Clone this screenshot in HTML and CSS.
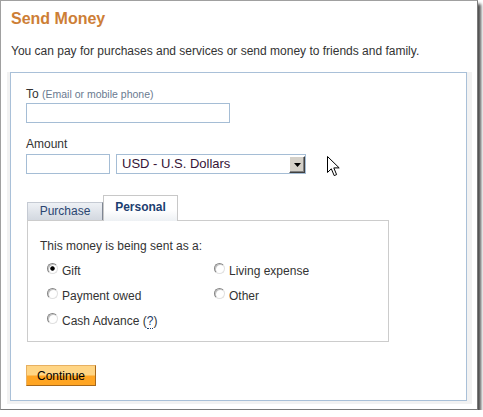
FILE: index.html
```html
<!DOCTYPE html>
<html>
<head>
    <title>Send Money</title>
    <link rel="stylesheet" href="styles.css">
</head>
<body>
    <div class="window">
        <h1 class="title">Send Money</h1>
        <p class="intro">You can pay for purchases and services or send money to friends and family.</p>

        <div class="box-wrap">
            <form class="box" onsubmit="event.preventDefault();">
                <label class="label">To <span class="hint">(Email or mobile phone)</span></label>
                <input type="text" class="field field-to">

                <label class="label label-amount">Amount</label>
                <div class="amount-row">
                    <input type="text" class="field field-amount">
                    <div class="select">
                        <span class="select-text">USD - U.S. Dollars</span>
                        <span class="select-btn">
                            <svg width="7" height="4" viewBox="0 0 7 4"><path d="M0 0h7L3.5 4z" fill="#000"/></svg>
                        </span>
                    </div>
                </div>

                <!-- tabs -->
                <div class="tabs">
                    <div class="tab">Purchase</div>
                    <div class="tab tab-active">Personal</div>
                </div>
                <div class="panel">
                    <div class="panel-title">This money is being sent as a:</div>
                    <div class="options">
                        <label class="option"><input type="radio" name="kind" checked><span>Gift</span></label>
                        <label class="option"><input type="radio" name="kind"><span>Living expense</span></label>
                        <label class="option"><input type="radio" name="kind"><span>Payment owed</span></label>
                        <label class="option"><input type="radio" name="kind"><span>Other</span></label>
                        <label class="option"><input type="radio" name="kind"><span>Cash Advance (<span class="help">?</span>)</span></label>
                    </div>
                </div>

                <button type="submit" class="button">Continue</button>
            </form>
        </div>

        <svg class="cursor" width="13" height="21" viewBox="0 0 13 21">
            <path d="M0.5 0.5V16.5L4.3 12.8L7.2 19.6L9.6 18.6L6.8 11.9H12.2Z" fill="#fff" stroke="#000" stroke-width="1" stroke-linejoin="miter"/>
        </svg>
    </div>
</body>
</html>
```

FILE: styles.css
```css
body {
    margin: 0;
    background: #fff;
    font-family: "Liberation Sans", Arial, sans-serif;
    font-size: 12px;
    color: #333;
}

/* screenshot frame */
.window {
    position: relative;
    width: 478px;
    height: 410px;
    box-sizing: border-box;
    border: 1px solid #a0a0a0;
    border-right-color: #7a7a7a;
    border-bottom-color: #7a7a7a;
    box-shadow: 3px 4px 3px rgba(0, 0, 0, 0.7);
    padding: 8px 0 0 0;
    background: #fff;
}

.title {
    margin: 0 0 0 10px;
    font-size: 16px;
    line-height: 19px;
    font-weight: bold;
    color: #cd7e36;
}

.intro {
    margin: 16px 0 0 10px;
    line-height: 15px;
}

.box-wrap {
    margin: 13px 5px 0 6px;
    padding: 0 5px 3px 3px;
    background: #f2f2f2;
}

.box {
    margin: 0;
    border: 1px solid #a9c0d8;
    background: #fff;
    padding: 14px 15px 14px 15px;
}

.label {
    display: block;
    line-height: 15px;
    color: #333;
}

.hint {
    font-size: 10.5px;
    color: #6a7a90;
}

.label-amount {
    margin-top: 14px;
}

.field {
    display: block;
    height: 20px;
    box-sizing: border-box;
    border: 1px solid #a5bdd5;
    padding: 2px;
    font-family: inherit;
    font-size: 12px;
    outline: none;
}

.field-to {
    width: 204px;
    margin-top: 1px;
}

.amount-row {
    display: flex;
    gap: 6px;
    margin-top: 2px;
}

.field-amount {
    width: 84px;
}

/* fake dropdown */
.select {
    width: 190px;
    height: 20px;
    box-sizing: border-box;
    border: 1px solid #a5bdd5;
    display: flex;
    justify-content: space-between;
    align-items: flex-start;
}

.select-text {
    padding-left: 5px;
    font-size: 13px;
    line-height: 18px;
    color: #361436;
}

.select-btn {
    width: 16px;
    height: 17px;
    margin-top: 1px;
    box-sizing: border-box;
    background: #d4d0c8;
    border: 1px solid;
    border-color: #fff #404040 #404040 #fff;
    box-shadow: inset -1px -1px 0 #808080;
    display: flex;
    align-items: center;
    justify-content: center;
}

/* tabs */
.tabs {
    display: flex;
    align-items: flex-end;
    margin: 21px 0 -1px 1px;
}

.tab {
    width: 76px;
    height: 18px;
    margin-bottom: 1px;
    box-sizing: border-box;
    border: 1px solid #c5cad3;
    border-bottom: none;
    border-right: 1px solid #7f8794;
    background: linear-gradient(#eef1f5, #d3d8e0);
    color: #2a4571;
    line-height: 17px;
    text-align: center;
}

.tab-active {
    position: relative;
    width: 75px;
    height: 26px;
    margin-bottom: 0;
    border-color: #c8c8c8;
    border-right: 1px solid #c8c8c8;
    background: linear-gradient(#fff 55%, #eef1f4);
    color: #1c4070;
    font-weight: bold;
    line-height: 15px;
    padding-top: 4px;
}

.panel {
    width: 362px;
    margin-left: 1px;
    box-sizing: border-box;
    border: 1px solid #cccccc;
    padding: 18px 12px 12px 12px;
}

.panel-title {
    line-height: 15px;
}

.options {
    display: grid;
    grid-template-columns: 167px auto;
    row-gap: 10px;
    margin: 10px 0 0 7px;
}

.option {
    display: flex;
    align-items: flex-start;
    gap: 4px;
    line-height: 15px;
    color: #333;
}

.option input[type="radio"] {
    -webkit-appearance: none;
    appearance: none;
    flex: none;
    width: 11px;
    height: 11px;
    margin: -1px 0 0 0;
    border-radius: 50%;
    border: 1px solid;
    border-color: #858585 #e0e0e0 #e0e0e0 #858585;
    background: #fff;
    box-shadow: inset 1px 1px 0 #c4c4c4;
}

.option input[type="radio"]:checked {
    background: radial-gradient(circle, #000 0, #000 1.8px, #fff 2.6px);
}

.help {
    color: #1c3c6c;
    border-bottom: 1px dotted #1c3c6c;
}

/* orange button */
.button {
    display: block;
    width: 70px;
    height: 21px;
    margin-top: 23px;
    padding: 0;
    border: 1px solid;
    border-color: #e7b061 #a8681a #a8681a #e7b061;
    background: linear-gradient(#ffd584 0, #ffd584 48%, #ffa523 52%, #ffa523 100%);
    font-family: inherit;
    font-size: 12px;
    color: #000;
    cursor: pointer;
}

.cursor {
    position: absolute;
    left: 326px;
    top: 155px;
}
```
